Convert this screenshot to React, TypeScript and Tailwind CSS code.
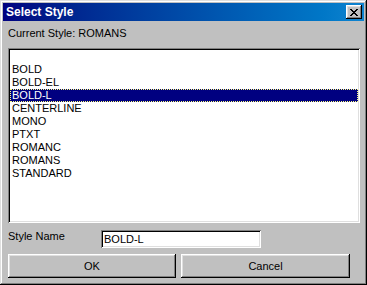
import React from "react";

const styles = ["", "BOLD", "BOLD-EL", "BOLD-L", "CENTERLINE", "MONO", "PTXT", "ROMANC", "ROMANS", "STANDARD"];
const selected = "BOLD-L";

const raised =
  "shadow-[inset_-1px_-1px_#000,inset_1px_1px_#fff,inset_-2px_-2px_#808080,inset_2px_2px_#dfdfdf]";
const sunken =
  "shadow-[inset_1px_1px_#808080,inset_-1px_-1px_#fff,inset_2px_2px_#000,inset_-2px_-2px_#dfdfdf]";

export default function App() {
  return (
    <div
      className="w-[367px] h-[285px] bg-[#c0c0c0] p-[3px] flex flex-col text-[11px] text-black shadow-[inset_-1px_-1px_#000,inset_1px_1px_#dfdfdf,inset_-2px_-2px_#808080,inset_2px_2px_#fff]"
      style={{ fontFamily: '"Liberation Sans", Arial, sans-serif' }}
    >
      {/* title bar */}
      <div className="h-[18px] flex items-center justify-between bg-gradient-to-r from-[#000080] to-[#1084d0] pl-[3px] pr-[2px]">
        <span className="text-white font-bold text-[12px] leading-none">Select Style</span>
        <button className={`w-[16px] h-[14px] bg-[#c0c0c0] flex items-center justify-center ${raised}`}>
          <svg width="8" height="7" viewBox="0 0 8 7" shapeRendering="crispEdges">
            <path
              d="M0 0h2v1h-2zM6 0h2v1h-2zM1 1h2v1h-2zM5 1h2v1h-2zM2 2h4v1h-4zM3 3h2v1h-2zM2 4h4v1h-4zM1 5h2v1h-2zM5 5h2v1h-2zM0 6h2v1h-2zM6 6h2v1h-2z"
              fill="#000"
            />
          </svg>
        </button>
      </div>

      <div className="flex flex-col px-[5px]">
        <div className="mt-[6px] h-[13px] leading-[13px]">Current Style: ROMANS</div>

        <div className={`mt-[8px] h-[175px] w-[352px] bg-white p-[2px] ${sunken}`}>
          {styles.map((s, i) => (
            <div
              key={i}
              className={
                s === selected
                  ? "h-[13px] leading-[13px] pl-[2px] bg-[#000080] text-white outline-1 outline-dotted outline-[#ffff80] -outline-offset-1"
                  : "h-[13px] leading-[13px] pl-[2px]"
              }
            >
              {s}
            </div>
          ))}
        </div>

        <div className="mt-[7px] flex items-start h-[18px]">
          <span className="w-[93px] leading-[13px]">Style Name</span>
          <div className={`w-[160px] h-[18px] bg-white pl-[3px] leading-[18px] ${sunken}`}>BOLD-L</div>
        </div>

        <div className="mt-[6px] flex gap-[5px]">
          <button className={`w-[168px] h-[24px] bg-[#c0c0c0] ${raised}`}>OK</button>
          <button className={`w-[169px] h-[24px] bg-[#c0c0c0] ${raised}`}>Cancel</button>
        </div>
      </div>
    </div>
  );
}
